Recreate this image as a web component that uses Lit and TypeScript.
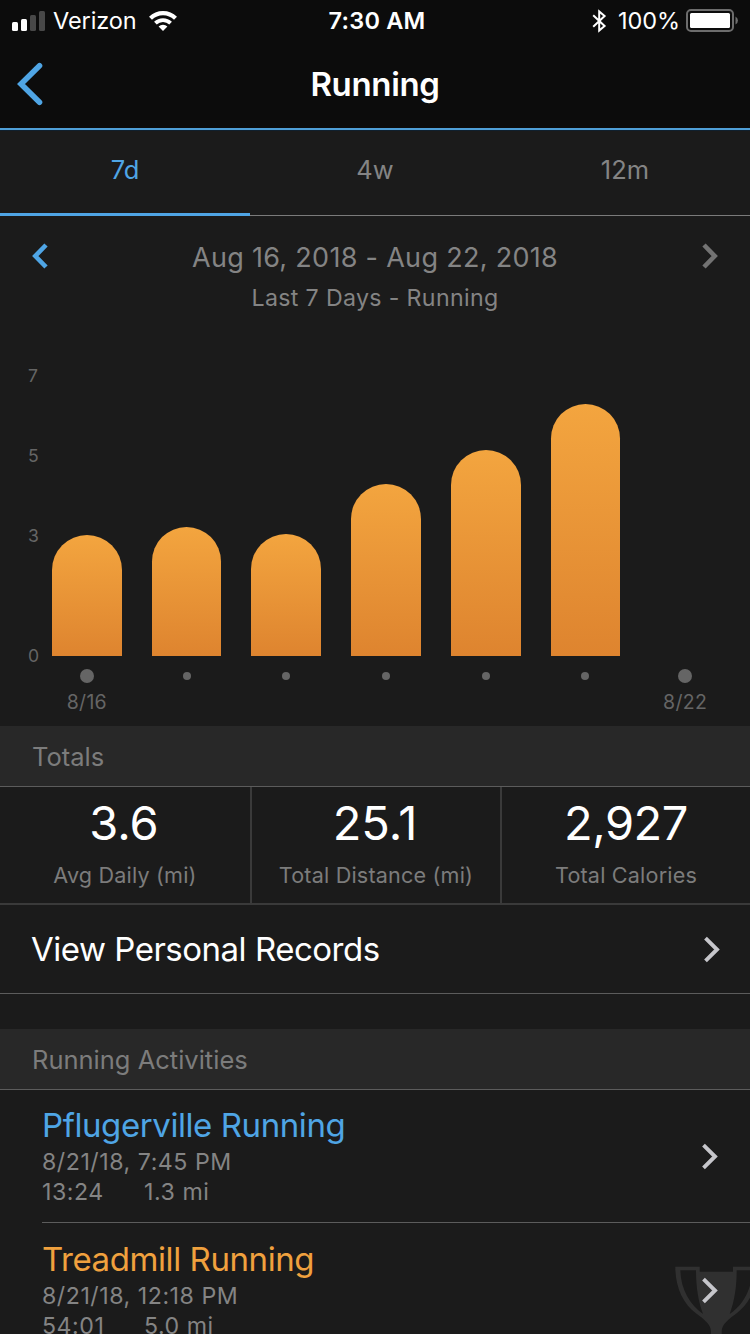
import { LitElement, html, css, svg } from "lit";
import { customElement, property } from "lit/decorators.js";
import { classMap } from "lit/directives/class-map.js";
import { styleMap } from "lit/directives/style-map.js";

const shared = css`
  * {
    box-sizing: border-box;
  }
  :host {
    display: block;
    font-family: Inter, "Liberation Sans", sans-serif;
    white-space: nowrap;
  }
  svg {
    display: block;
    flex: none;
  }
`;

@customElement("status-bar")
class StatusBar extends LitElement {
  static styles = [
    shared,
    css`
      .bar {
        display: grid;
        grid-template-columns: 1fr auto 1fr;
        height: 41px;
        line-height: 41px;
        color: #fff;
        font-size: 23.5px;
      }
      .side {
        display: flex;
        align-items: center;
      }
      .left {
        padding-left: 12px;
      }
      .right {
        justify-content: flex-end;
        padding-right: 11px;
      }
      .carrier {
        margin-left: 8px;
        letter-spacing: -0.1px;
      }
      .wifi {
        margin-left: 12.5px;
      }
      .time {
        font-weight: 600;
        letter-spacing: 0.2px;
        padding-left: 4px;
      }
      .percent {
        margin: 0 6px 0 11px;
        letter-spacing: -0.1px;
      }
    `,
  ];

  render() {
    return html`
      <div class="bar">
        <div class="side left">
          <svg width="33" height="20" viewBox="0 0 33 20">
            <rect x="0" y="11" width="6" height="9" rx="1.5" fill="#fff" />
            <rect x="9" y="8" width="6" height="12" rx="1.5" fill="#fff" />
            <rect x="18" y="4" width="6" height="16" rx="1.5" fill="#484848" />
            <rect x="27" y="0" width="6" height="20" rx="1.5" fill="#484848" />
          </svg>
          <span class="carrier">Verizon</span>
          <svg class="wifi" width="28" height="20" viewBox="0 0 28 20">
            <path d="M1.5 7.3a17.8 17.8 0 0 1 25 0" fill="none" stroke="#fff" stroke-width="4.2" />
            <path d="M6.4 12.2a10.8 10.8 0 0 1 15.2 0" fill="none" stroke="#fff" stroke-width="3.8" />
            <path d="M9.6 15.6a6.2 6.2 0 0 1 8.8 0L14 20z" fill="#fff" />
          </svg>
        </div>
        <span class="time">7:30 AM</span>
        <div class="side right">
          <svg width="15" height="24" viewBox="0 0 15 24">
            <path d="M1.2 6.2 12.6 17 7.2 21.6V2.4l5.4 4.6L1.2 17.8" fill="none" stroke="#fff" stroke-width="2" />
          </svg>
          <span class="percent">100%</span>
          <svg width="53" height="23" viewBox="0 0 53 23">
            <rect x="1" y="1" width="46" height="21" rx="4" fill="none" stroke="#6d6d6d" stroke-width="2" />
            <rect x="4" y="4" width="40" height="15" rx="1.5" fill="#fff" />
            <path d="M49.5 7.5a4.5 4.5 0 0 1 0 8z" fill="#6d6d6d" />
          </svg>
        </div>
      </div>
    `;
  }
}

@customElement("nav-header")
class NavHeader extends LitElement {
  @property() heading = "";

  static styles = [
    shared,
    css`
      .nav {
        display: grid;
        grid-template-columns: 1fr auto 1fr;
        align-items: center;
        height: 87px;
        padding: 0 17px 1px;
      }
      .heading {
        color: #fff;
        font-size: 33px;
        font-weight: 600;
        line-height: 86px;
        letter-spacing: -0.35px;
      }
    `,
  ];

  render() {
    return html`
      <div class="nav">
        <svg width="28" height="44" viewBox="0 0 28 44">
          <path d="M22.5 3.8 4 22l18.5 18.2" fill="none" stroke="#4fa5e5" stroke-width="5.6" stroke-linecap="round" />
        </svg>
        <span class="heading">${this.heading}</span>
      </div>
    `;
  }
}

@customElement("range-tabs")
class RangeTabs extends LitElement {
  static styles = [
    shared,
    css`
      .tabs {
        display: grid;
        grid-template-columns: repeat(3, 1fr);
        height: 86px;
        border-top: 1px solid #10202e;
      }
      .tab {
        display: flex;
        justify-content: center;
        border-bottom: 1px solid #7b7b7b;
        line-height: 78px;
        font-size: 25.5px;
        color: #848484;
      }
      .active {
        color: #4fa5e5;
        border-bottom: 3px solid #4fa5e5;
      }
    `,
  ];

  render() {
    return html`
      <div class="tabs">
        ${["7d", "4w", "12m"].map(
          (t, i) => html`<div class=${classMap({ tab: true, active: i === 0 })}>${t}</div>`
        )}
      </div>
    `;
  }
}

@customElement("period-picker")
class PeriodPicker extends LitElement {
  static styles = [
    shared,
    css`
      .picker {
        display: grid;
        grid-template-columns: 18px 1fr 18px;
        padding: 21px 31px 0;
        height: 120px;
      }
      .arrow {
        margin-top: 6px;
      }
      .labels {
        display: flex;
        flex-direction: column;
        align-items: center;
        color: #848484;
      }
      .range {
        font-size: 27px;
        line-height: 41px;
        letter-spacing: 0.3px;
      }
      .caption {
        font-size: 23.2px;
        line-height: 40px;
        letter-spacing: 0.33px;
      }
    `,
  ];

  render() {
    return html`
      <div class="picker">
        <svg class="arrow" width="18" height="26" viewBox="0 0 18 26">
          <path d="M15 2 4.3 13 15 24" fill="none" stroke="#4fa5e5" stroke-width="4.6" />
        </svg>
        <div class="labels">
          <span class="range">Aug 16, 2018 - Aug 22, 2018</span>
          <span class="caption">Last 7 Days - Running</span>
        </div>
        <svg class="arrow" width="18" height="26" viewBox="0 0 18 26">
          <path d="M3 2 13.7 13 3 24" fill="none" stroke="#737373" stroke-width="4.6" />
        </svg>
      </div>
    `;
  }
}

@customElement("distance-chart")
class DistanceChart extends LitElement {
  private days = [
    { height: 121, label: "8/16" },
    { height: 129, label: "" },
    { height: 122, label: "" },
    { height: 172, label: "" },
    { height: 206, label: "" },
    { height: 252, label: "" },
    { height: 0, label: "8/22" },
  ];

  static styles = [
    shared,
    css`
      .chart {
        display: grid;
        grid-template-columns: 24px 1fr;
        padding: 30px 30px 0 28px;
        height: 390px;
        color: #656565;
      }
      .axis {
        display: grid;
        grid-template-rows: 80px 80px 120px 20px;
        line-height: 20px;
        font-size: 17.6px;
      }
      .days {
        display: grid;
        grid-template-columns: repeat(7, 1fr);
        column-gap: 30px;
      }
      .day {
        display: grid;
        grid-template-rows: 290px 40px 12px;
        justify-items: center;
        align-items: center;
      }
      .bar {
        align-self: end;
        width: 100%;
        border-radius: 35px 35px 0 0;
        background: linear-gradient(#f3a53f, #de842f);
      }
      .dot {
        width: 8px;
        height: 8px;
        border-radius: 50%;
        background: #656565;
      }
      .large {
        width: 14px;
        height: 14px;
      }
      .label {
        font-size: 19.5px;
        line-height: 12px;
        letter-spacing: 0.3px;
      }
    `,
  ];

  render() {
    return html`
      <div class="chart">
        <div class="axis">${[7, 5, 3, 0].map((n) => html`<span>${n}</span>`)}</div>
        <div class="days">
          ${this.days.map(
            (d) => html`
              <div class="day">
                <div class="bar" style=${styleMap({ height: `${d.height}px` })}></div>
                <div class=${classMap({ dot: true, large: d.label !== "" })}></div>
                <span class="label">${d.label}</span>
              </div>
            `
          )}
        </div>
      </div>
    `;
  }
}

@customElement("section-title")
class SectionTitle extends LitElement {
  @property() heading = "";

  static styles = [
    shared,
    css`
      .title {
        height: 61px;
        padding-left: 32px;
        line-height: 61px;
        font-size: 25.5px;
        color: #7c7c7c;
        background: #282828;
        border-bottom: 1px solid #5c5c5c;
      }
    `,
  ];

  render() {
    return html`<div class="title">${this.heading}</div>`;
  }
}

@customElement("totals-row")
class TotalsRow extends LitElement {
  private totals = [
    ["3.6", "Avg Daily (mi)"],
    ["25.1", "Total Distance (mi)"],
    ["2,927", "Total Calories"],
  ];

  static styles = [
    shared,
    css`
      .row {
        display: grid;
        grid-template-columns: 252px 250px 1fr;
        height: 118px;
        border-bottom: 2px solid #3a3a3a;
      }
      .cell {
        display: flex;
        flex-direction: column;
        align-items: center;
        padding-top: 6px;
        border-right: 2px solid #3a3a3a;
      }
      .cell:last-child {
        border-right: 0;
      }
      .value {
        padding-right: 2px;
        font-size: 47px;
        line-height: 60px;
        color: #fff;
      }
      .cell:last-child .value {
        padding-right: 0;
        letter-spacing: -0.5px;
      }
      .name {
        font-size: 21.6px;
        line-height: 44px;
        letter-spacing: 0.18px;
        color: #7c7c7c;
      }
    `,
  ];

  render() {
    return html`
      <div class="row">
        ${this.totals.map(
          ([v, n]) => html`
            <div class="cell"><span class="value">${v}</span><span class="name">${n}</span></div>
          `
        )}
      </div>
    `;
  }
}

const disclosure = svg`<path d="M2.5 2.2 14 13.5 2.5 24.8" fill="none" stroke="#c6c6cb" stroke-width="3.9" />`;

@customElement("link-row")
class LinkRow extends LitElement {
  @property() label = "";

  static styles = [
    shared,
    css`
      .row {
        display: flex;
        align-items: center;
        justify-content: space-between;
        height: 89px;
        padding: 0 29px 0 31px;
        border-bottom: 1px solid #5c5c5c;
        color: #fff;
        font-size: 33px;
        letter-spacing: -0.49px;
      }
    `,
  ];

  render() {
    return html`
      <div class="row">
        <span>${this.label}</span>
        <svg width="18" height="27" viewBox="0 0 18 27">${disclosure}</svg>
      </div>
    `;
  }
}

@customElement("activity-row")
class ActivityRow extends LitElement {
  @property() name = "";
  @property() date = "";
  @property() duration = "";
  @property() distance = "";
  @property() tone = "blue";

  static styles = [
    shared,
    css`
      .row {
        display: flex;
        align-items: center;
        justify-content: space-between;
        height: 134px;
        margin-left: 42px;
        padding-right: 31px;
        border-bottom: 1px solid #5c5c5c;
      }
      .text {
        align-self: flex-start;
        padding-top: 14px;
        color: #848484;
        font-size: 23.2px;
        line-height: 30px;
        letter-spacing: 0.52px;
      }
      .name {
        height: 44px;
        line-height: 44px;
        font-size: 33px;
        letter-spacing: -0.42px;
      }
      .arrow {
        margin-top: 1px;
      }
      .blue {
        color: #4fa5e5;
      }
      .orange {
        color: #f0a13e;
      }
      .metrics {
        display: grid;
        grid-template-columns: 102px auto;
      }
    `,
  ];

  render() {
    return html`
      <div class="row">
        <div class="text">
          <div class=${classMap({ name: true, [this.tone]: true })}>${this.name}</div>
          <div class="date">${this.date}</div>
          <div class="metrics"><span>${this.duration}</span><span>${this.distance}</span></div>
        </div>
        <svg class="arrow" width="18" height="27" viewBox="0 0 18 27">${disclosure}</svg>
      </div>
    `;
  }
}

@customElement("app-root")
class AppRoot extends LitElement {
  static styles = [
    shared,
    css`
      :host {
        position: relative;
        width: 750px;
        height: 1334px;
        overflow: hidden;
        background: #1b1b1b;
      }
      .top {
        background: #0c0c0c;
        border-bottom: 2px solid #4f9fd8;
      }
      .spacer {
        height: 35px;
      }
      .trophy {
        position: absolute;
        right: 0;
        bottom: 0;
      }
      .activities {
        position: relative;
        margin-top: -1px;
      }
    `,
  ];

  render() {
    return html`
      <div class="top">
        <status-bar></status-bar>
        <nav-header heading="Running"></nav-header>
      </div>
      <range-tabs></range-tabs>
      <period-picker></period-picker>
      <distance-chart></distance-chart>
      <section-title heading="Totals"></section-title>
      <totals-row></totals-row>
      <link-row label="View Personal Records"></link-row>
      <div class="spacer"></div>
      <section-title heading="Running Activities"></section-title>
      <svg class="trophy" width="75" height="68" viewBox="675 1266 75 68">
        <path
          fill="#303030"
          fill-rule="evenodd"
          d="M675.3 1266.7H699.7V1271.7H733V1266.7H757.4C757.4 1288 749 1304 737 1313C729 1319 722 1324 721.7 1331V1334H711V1331C710.6 1324 703.6 1319 695.6 1313C683.6 1304 675.3 1288 675.3 1266.7ZM680.3 1270.3C681 1290 690 1305 703 1314C698.5 1302 696 1288 696 1270.3ZM752.3 1270.3H736.7C736.7 1288 734.2 1302 729.7 1314C742.7 1305 751.7 1290 752.3 1270.3Z"
        />
      </svg>
      <div class="activities">
        <activity-row
          name="Pflugerville Running"
          date="8/21/18, 7:45 PM"
          duration="13:24"
          distance="1.3 mi"
          tone="blue"
        ></activity-row>
        <activity-row
          name="Treadmill Running"
          date="8/21/18, 12:18 PM"
          duration="54:01"
          distance="5.0 mi"
          tone="orange"
        ></activity-row>
      </div>
    `;
  }
}
